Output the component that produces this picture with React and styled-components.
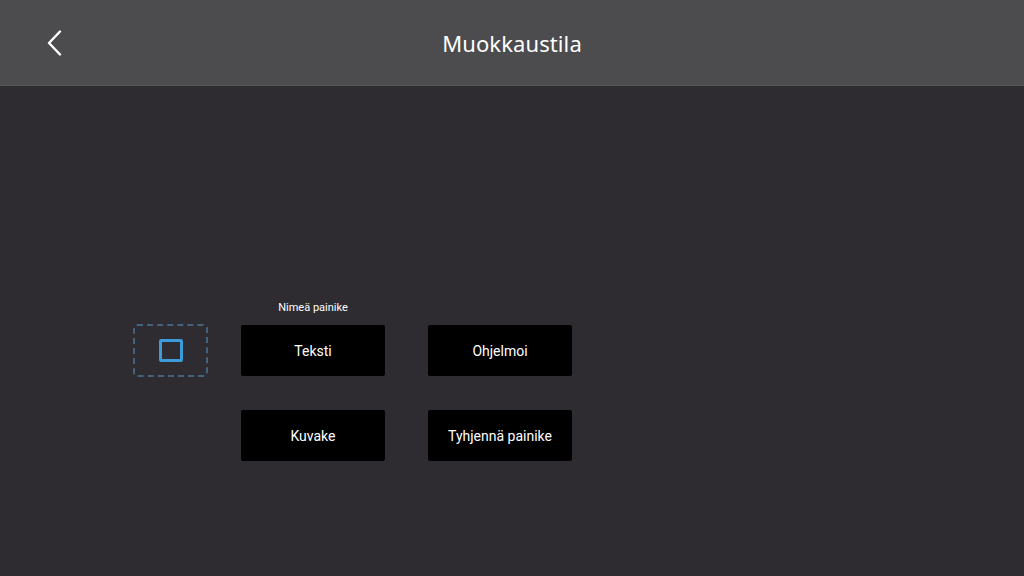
import React from "react";
import styled, { createGlobalStyle } from "styled-components";

const Global = createGlobalStyle`
  html, body { margin: 0; padding: 0; background: #2e2c31; }
  body { font-family: "Noto Sans", "Open Sans", sans-serif; }
  #root { width: 1024px; height: 576px; }
`;

const Screen = styled.div`
  width: 1024px;
  height: 576px;
  display: flex;
  flex-direction: column;
  background: #2e2c31;
  overflow: hidden;
`;

const Header = styled.header`
  height: 86px;
  flex: 0 0 86px;
  background: #4c4c4e;
  border-bottom: 1px solid #58585a;
  box-sizing: border-box;
  display: grid;
  grid-template-columns: 120px 1fr 120px;
  align-items: center;
`;

const BackButton = styled.button`
  background: none;
  border: none;
  padding: 0;
  margin-left: 44px;
  width: 20px;
  height: 28px;
  display: flex;
  align-items: center;
  justify-content: center;
  cursor: pointer;
`;

const Title = styled.h1`
  margin: 0;
  text-align: center;
  color: #ffffff;
  font-family: "Noto Sans", sans-serif;
  font-weight: 400;
  font-size: 22px;
  letter-spacing: 0.1px;
`;

const Body = styled.main`
  flex: 1;
  display: flex;
  padding: 214px 0 0 133px;
  box-sizing: border-box;
`;

const Editor = styled.div`
  display: flex;
  align-items: flex-start;
  gap: 33px;
`;

const Slot = styled.div`
  margin-top: 24px;
  width: 75px;
  height: 53px;
  box-sizing: border-box;
  border: 2px dashed #43627d;
  border-radius: 4px;
  display: flex;
  align-items: center;
  justify-content: center;
`;

const SlotIcon = styled.div`
  width: 24px;
  height: 23px;
  box-sizing: border-box;
  border: 3px solid #3b9bdb;
  border-radius: 2px;
`;

const Actions = styled.div`
  display: grid;
  grid-template-columns: 144px 144px;
  column-gap: 43px;
  row-gap: 34px;
`;

const Label = styled.div`
  color: #ffffff;
  font-family: Roboto, "Noto Sans", sans-serif;
  font-size: 11px;
  line-height: 16px;
  height: 16px;
  margin-bottom: 9px;
  visibility: ${(p) => (p.$hidden ? "hidden" : "visible")};
`;

const ActionButton = styled.button`
  width: 144px;
  height: 51px;
  background: #000000;
  border: none;
  border-radius: 2px;
  color: #ffffff;
  font-family: Roboto, "Noto Sans", sans-serif;
  font-size: 14px;
  cursor: pointer;
`;

const Cell = styled.div`
  display: flex;
  flex-direction: column;
  align-items: center;
`;

export default function App() {
  return (
    <>
      <Global />
      <Screen>
        <Header>
          <BackButton aria-label="Takaisin">
            <svg width="17" height="26" viewBox="0 0 17 26">
              <path d="M14 1.5 L3 13 L14 24.5" fill="none" stroke="#fff" strokeWidth="2.4" strokeLinecap="round" strokeLinejoin="round" />
            </svg>
          </BackButton>
          <Title>Muokkaustila</Title>
          <div />
        </Header>
        <Body>
          <Editor>
            <Slot>
              <SlotIcon />
            </Slot>
            <Actions>
              <Cell>
                <Label>Nimeä painike</Label>
                <ActionButton>Teksti</ActionButton>
              </Cell>
              <Cell>
                <Label $hidden>&nbsp;</Label>
                <ActionButton>Ohjelmoi</ActionButton>
              </Cell>
              <ActionButton>Kuvake</ActionButton>
              <ActionButton>Tyhjennä painike</ActionButton>
            </Actions>
          </Editor>
        </Body>
      </Screen>
    </>
  );
}
